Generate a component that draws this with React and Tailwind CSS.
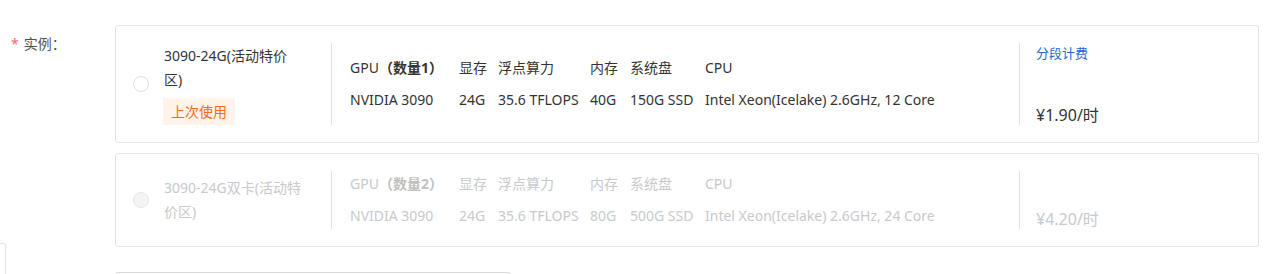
import React from 'react'

const cols = ['w-[109px]', 'w-[39px]', 'w-[92px]', 'w-[40px]', 'w-[75px]', 'flex-1']

const instances = [
  {
    id: 'a',
    title: ['3090-24G(活动特价', '区)'],
    count: 1,
    specs: ['NVIDIA 3090', '24G', '35.6 TFLOPS', '40G', '150G SSD', 'Intel Xeon(Icelake) 2.6GHz, 12 Core'],
    price: '¥1.90/时',
    tag: '上次使用',
    tiered: true,
    disabled: false,
  },
  {
    id: 'b',
    title: ['3090-24G双卡(活动特', '价区)'],
    count: 2,
    specs: ['NVIDIA 3090', '24G', '35.6 TFLOPS', '80G', '500G SSD', 'Intel Xeon(Icelake) 2.6GHz, 24 Core'],
    price: '¥4.20/时',
    disabled: true,
  },
]

function InstanceCard({ item }) {
  const dim = item.disabled
  const text = dim ? 'text-[#c8c9cc]' : 'text-[#333333]'
  return (
    <div
      className={`flex items-center border border-[#e2e2e2] rounded-[3px] bg-white ${
        item.tag ? 'h-[118px]' : 'h-[94px]'
      }`}
    >
      <span
        className={`ml-[17px] w-[16px] h-[16px] rounded-full border shrink-0 ${
          dim ? 'border-[#e4e7ed] bg-[#f3f4f6]' : 'border-[#dcdfe6] bg-white'
        }`}
      />
      <div className="ml-[15px] w-[150px] shrink-0">
        <div className={`text-[14px] leading-[24px] ${text}`}>
          {item.title.map((line) => (
            <div key={line}>{line}</div>
          ))}
        </div>
        {item.tag && (
          <div className="mt-[6px] -ml-px inline-flex h-[27px] items-center px-[8px] bg-[#fff3ea] text-[#f56a14] text-[14px]">
            {item.tag}
          </div>
        )}
      </div>

      <div className="ml-[17px] self-stretch my-[17px] w-px bg-[#e0e0e0] shrink-0" />

      <div className={`ml-[18px] flex-1 flex flex-col gap-[12px] text-[14px] leading-[20px] ${text}`}>
        <div className="flex">
          <div className={cols[0]}>
            GPU<span className={`font-bold ${dim ? 'text-[#c0c0c0]' : 'text-[#333]'}`}>（数量{item.count}）</span>
          </div>
          <div className={cols[1]}>显存</div>
          <div className={cols[2]}>浮点算力</div>
          <div className={cols[3]}>内存</div>
          <div className={cols[4]}>系统盘</div>
          <div className={cols[5]}>CPU</div>
        </div>
        <div className="flex whitespace-nowrap">
          {item.specs.map((s, i) => (
            <div key={i} className={cols[i]}>
              {s}
            </div>
          ))}
        </div>
      </div>

      <div className="self-stretch my-[17px] w-px bg-[#e0e0e0] shrink-0" />

      <div className="ml-[16px] w-[222px] self-stretch my-[17px] flex flex-col justify-between">
        <div className="text-[13px] leading-[20px] text-[#1f66d6]">{item.tiered ? '分段计费' : ''}</div>
        <div className={`text-[16px] leading-[20px] ${dim ? 'text-[#c8c9cc]' : 'text-[#333333]'}`}>{item.price}</div>
      </div>
    </div>
  )
}

export default function App() {
  return (
    <div
      className="relative w-[1276px] h-[274px] overflow-hidden bg-white"
      style={{ fontFamily: '"Noto Sans", "Noto Sans CJK SC", sans-serif' }}
    >
      <div className="flex pt-[25px]">
        <div className="w-[115px] shrink-0 pl-[11px] pt-[9px] text-[14px] leading-[20px] text-[#505050]">
          <span className="text-[#f56c6c] mr-[5px]">*</span>实例：
        </div>
        <div className="w-[1144px] flex flex-col gap-[10px]">
          {instances.map((item) => (
            <InstanceCard key={item.id} item={item} />
          ))}
          <div className="mt-[15px] w-[396px] h-[40px] border border-[#d8d8d8] rounded-t-[3px]" />
        </div>
      </div>

      {/* floating side tab peeking in at the left edge */}
      <div className="absolute left-0 top-[243px] w-[6px] h-[40px] border-t border-r border-[#e4e4e4] rounded-tr-[3px]" />
    </div>
  )
}
